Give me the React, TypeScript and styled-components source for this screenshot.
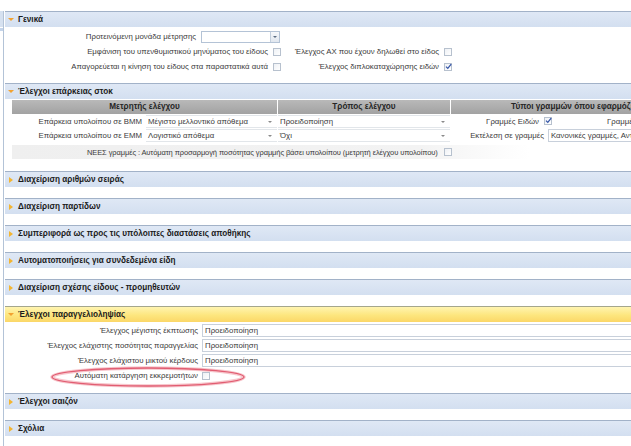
import React from 'react';
import styled, { createGlobalStyle } from 'styled-components';

const GlobalStyle = createGlobalStyle`
  html, body {
    margin: 0;
    padding: 0;
    background: #ffffff;
  }
  body {
    font-family: "Liberation Sans", Arial, sans-serif;
    font-size: 7.8px;
    color: #3a3a3a;
  }
`;

const Page = styled.div`
  position: relative;
  display: flex;
  width: 631px;
  height: 446px;
  overflow: hidden;
  background: #ffffff;
`;

const SideStrip = styled.div`
  flex: none;
  width: 3px;
  margin-top: 11px;
  border-right: 1px solid #b3c3d7;
  background: linear-gradient(#d6e1f0 0, #d6e1f0 16px, #ffffff 16px, #ffffff 17px, #c4d4ea 17px, #c4d4ea 20px, #ffffff 20px);
`;

const Main = styled.div`
  flex: none;
  width: 760px;
  padding-top: 11px;
  padding-left: 1px;
`;

const Section = styled.section`
  display: flex;
  flex-direction: column;
`;

const SectionHeader = styled.div<{ $active?: boolean }>`
  display: flex;
  align-items: center;
  height: 15px;
  padding-left: 4px;
  border-top: 1px solid ${({ $active }) => ($active ? '#a4a68c' : '#a2b2c8')};
  background: ${({ $active }) =>
    $active
      ? 'linear-gradient(#fff4b0, #fde67e 55%, #fbd768)'
      : 'linear-gradient(#dfe8f5, #d3dff0)'};
  font-weight: bold;
  font-size: 8.2px;
  color: #1c1c1c;
`;

const Arrow = styled.span<{ $open?: boolean }>`
  display: inline-block;
  width: 0;
  height: 0;
  ${({ $open }) =>
    $open
      ? `
    border-left: 3px solid transparent;
    border-right: 3px solid transparent;
    border-top: 3px solid #f2a230;
    margin: 0 4px 0 -1px;
  `
      : `
    border-top: 3.5px solid transparent;
    border-bottom: 3.5px solid transparent;
    border-left: 4px solid #f3b531;
    margin: 0 5px 0 0;
  `}
`;

const CollapsedGap = styled.div`
  height: 11px;
`;

const Body = styled.div<{ $top: number; $bottom: number }>`
  padding-top: ${({ $top }) => $top}px;
  padding-bottom: ${({ $bottom }) => $bottom}px;
`;

/* ---------- form parts ---------- */

const FormRow = styled.div`
  display: flex;
  height: 15px;
  align-items: center;
`;

const Cell = styled.div<{ $width: number }>`
  flex: none;
  width: ${({ $width }) => $width}px;
  display: flex;
  justify-content: flex-end;
  align-items: center;
  gap: 5px;
  white-space: nowrap;
`;

const Label = styled.span`
  white-space: nowrap;
  color: #3a3a3a;
`;

const LabelCol = styled.div<{ $width: number; $left?: number }>`
  flex: none;
  width: ${({ $width }) => $width}px;
  text-align: ${({ $left }) => ($left !== undefined ? 'left' : 'right')};
  padding-left: ${({ $left }) => $left ?? 0}px;
  padding-right: ${({ $left }) => ($left !== undefined ? 0 : 4)}px;
  white-space: nowrap;
  box-sizing: border-box;
`;

const Combo = styled.div<{ $width: number }>`
  display: flex;
  align-items: stretch;
  width: ${({ $width }) => $width}px;
  height: 12px;
  border: 1px solid #b4c3d6;
  background: #ffffff;
  box-sizing: border-box;
`;

const ComboButton = styled.div`
  margin-left: auto;
  width: 8px;
  border-left: 1px solid #c3cfdd;
  background: linear-gradient(#f6f8fb, #e1e7ef);
  display: flex;
  align-items: center;
  justify-content: center;
  &::after {
    content: '';
    border-left: 2px solid transparent;
    border-right: 2px solid transparent;
    border-top: 2px solid #5a6b80;
  }
`;

const CheckBox = styled.span`
  flex: none;
  position: relative;
  width: 8px;
  height: 8px;
  border: 1px solid #b7c1ce;
  background: linear-gradient(135deg, #eef1f5, #ffffff);
  box-sizing: border-box;
  display: inline-flex;
  align-items: center;
  justify-content: center;
`;

const Check = () => (
  <svg width="7" height="7" viewBox="0 0 7 7" style={{ position: 'absolute', left: 0, top: -1 }}>
    <path d="M1 3.6 L2.8 5.4 L6.2 1.2" fill="none" stroke="#3656a8" strokeWidth="1.3" />
  </svg>
);

const Box: React.FC<{ checked?: boolean }> = ({ checked }) => (
  <CheckBox>{checked && <Check />}</CheckBox>
);

/* ---------- stock grid ---------- */

const StockGrid = styled.div`
  display: grid;
  grid-template-columns: 265px 172px 300px;
  column-gap: 1px;
  margin-left: 7px;
`;

const GridHead = styled.div<{ $indent?: number }>`
  height: 14px;
  line-height: 14px;
  text-align: ${({ $indent }) => ($indent ? 'left' : 'center')};
  padding-left: ${({ $indent }) => $indent ?? 0}px;
  font-weight: bold;
  font-size: 8.2px;
  color: #262626;
  background: linear-gradient(#b9b9b9, #a2a2a2);
  white-space: nowrap;
  overflow: hidden;
`;

const GridCell = styled.div`
  display: flex;
  align-items: center;
  height: 14px;
  white-space: nowrap;
`;

const Select = styled.div<{ $width?: number }>`
  position: relative;
  display: flex;
  align-items: center;
  height: 13px;
  width: ${({ $width }) => ($width ? `${$width}px` : '100%')};
  padding-left: 2px;
  box-sizing: border-box;
  background: #ffffff;
  border-top: 1px solid #e2e6ea;
  border-bottom: 1px solid #e2e6ea;
  &::after {
    content: '';
    position: absolute;
    right: 5px;
    top: 5px;
    border-left: 2px solid transparent;
    border-right: 2px solid transparent;
    border-top: 2.5px solid #8a8a8a;
  }
`;

const TextBox = styled.div`
  flex: 1;
  display: flex;
  align-items: center;
  height: 13px;
  padding-left: 2px;
  box-sizing: border-box;
  background: #ffffff;
  border: 1px solid #c8d0db;
  white-space: nowrap;
  overflow: hidden;
`;

const Band = styled.div`
  grid-column: 1 / span 3;
  display: flex;
  align-items: center;
  height: 14px;
  margin-top: 3px;
  padding-left: 75px;
  gap: 6px;
  font-size: 7.5px;
  letter-spacing: -0.1px;
  background: linear-gradient(90deg, #efefef, #f3f3f3 55%, #ffffff 70%);
  white-space: nowrap;
`;

/* ---------- order controls ---------- */

const OrderRow = styled.div`
  display: flex;
  align-items: center;
  height: 15px;
`;

const Annotation = styled.svg`
  position: absolute;
  left: 48px;
  top: 364px;
  pointer-events: none;
`;

const collapsed = [
  'Διαχείριση αριθμών σειράς',
  'Διαχείριση παρτίδων',
  'Συμπεριφορά ως προς τις υπόλοιπες διαστάσεις αποθήκης',
  'Αυτοματοποιήσεις για συνδεδεμένα είδη',
  'Διαχείριση σχέσης είδους - προμηθευτών',
];

const orderChecks = [
  'Έλεγχος μέγιστης έκπτωσης',
  'Έλεγχος ελάχιστης ποσότητας παραγγελίας',
  'Έλεγχος ελάχιστου μικτού κέρδους',
];

const CollapsedSection: React.FC<{ title: string }> = ({ title }) => (
  <Section>
    <SectionHeader>
      <Arrow />
      {title}
    </SectionHeader>
    <CollapsedGap />
  </Section>
);

const App: React.FC = () => {
  return (
    <Page>
      <GlobalStyle />
      <SideStrip />
      <Main>
        <Section>
          <SectionHeader>
            <Arrow $open />
            Γενικά
          </SectionHeader>
          <Body $top={2} $bottom={9}>
            <FormRow>
              <Cell $width={275}>
                <Label>Προτεινόμενη μονάδα μέτρησης</Label>
                <Combo $width={79}>
                  <ComboButton />
                </Combo>
              </Cell>
            </FormRow>
            <FormRow>
              <Cell $width={276}>
                <Label>Εμφάνιση του υπενθυμιστικού μηνύματος του είδους</Label>
                <Box />
              </Cell>
              <Cell $width={171}>
                <Label>Έλεγχος ΑΧ που έχουν δηλωθεί στο είδος</Label>
                <Box />
              </Cell>
            </FormRow>
            <FormRow>
              <Cell $width={276}>
                <Label>Απαγορεύεται η κίνηση του είδους στα παραστατικά αυτά</Label>
                <Box />
              </Cell>
              <Cell $width={171}>
                <Label>Έλεγχος διπλοκαταχώρησης ειδών</Label>
                <Box checked />
              </Cell>
            </FormRow>
          </Body>
        </Section>

        <Section>
          <SectionHeader>
            <Arrow $open />
            Έλεγχοι επάρκειας στοκ
          </SectionHeader>
          <Body $top={1} $bottom={12}>
            <StockGrid>
              <GridHead>Μετρητής ελέγχου</GridHead>
              <GridHead>Τρόπος ελέγχου</GridHead>
              <GridHead $indent={60}>Τύποι γραμμών όπου εφαρμόζεται</GridHead>

              <GridCell>
                <LabelCol $width={134}>Επάρκεια υπολοίπου σε ΒΜΜ</LabelCol>
                <Select $width={131}>Μέγιστο μελλοντικό απόθεμα</Select>
              </GridCell>
              <GridCell>
                <Select>Προειδοποίηση</Select>
              </GridCell>
              <GridCell>
                <Cell $width={101}>
                  <Label>Γραμμές Ειδών</Label>
                  <Box checked />
                </Cell>
                <LabelCol $width={150} $left={55}>
                  Γραμμές Υπηρεσιών
                </LabelCol>
              </GridCell>

              <GridCell>
                <LabelCol $width={134}>Επάρκεια υπολοίπου σε ΕΜΜ</LabelCol>
                <Select $width={131}>Λογιστικό απόθεμα</Select>
              </GridCell>
              <GridCell>
                <Select>Όχι</Select>
              </GridCell>
              <GridCell>
                <LabelCol $width={97}>Εκτέλεση σε γραμμές</LabelCol>
                <TextBox>Κανονικές γραμμές, Αντικαταστάσεις</TextBox>
              </GridCell>

              <Band>
                ΝΕΕΣ γραμμές : Αυτόματη προσαρμογή ποσότητας γραμμής βάσει υπολοίπου (μετρητή ελέγχου υπολοίπου)
                <Box />
              </Band>
            </StockGrid>
          </Body>
        </Section>

        {collapsed.map((title) => (
          <CollapsedSection key={title} title={title} />
        ))}

        <Section>
          <SectionHeader $active>
            <Arrow $open />
            Έλεγχοι παραγγελιοληψίας
          </SectionHeader>
          <Body $top={1} $bottom={10}>
            {orderChecks.map((label) => (
              <OrderRow key={label}>
                <LabelCol $width={197}>{label}</LabelCol>
                <TextBox>Προειδοποίηση</TextBox>
              </OrderRow>
            ))}
            <OrderRow>
              <LabelCol $width={197}>Αυτόματη κατάργηση εκκρεμοτήτων</LabelCol>
              <Box />
            </OrderRow>
          </Body>
        </Section>

        <CollapsedSection title="Έλεγχοι σαιζόν" />
        <CollapsedSection title="Σχόλια" />
      </Main>

      <Annotation width="204" height="26" viewBox="0 0 204 26">
        <ellipse cx="100" cy="13" rx="96" ry="9" fill="none" stroke="#f2a0aa" strokeWidth="3.5" opacity="0.6" />
        <ellipse cx="100" cy="13" rx="96" ry="9" fill="none" stroke="#dd4a62" strokeWidth="1.3" opacity="0.85" />
      </Annotation>
    </Page>
  );
};

export default App;
